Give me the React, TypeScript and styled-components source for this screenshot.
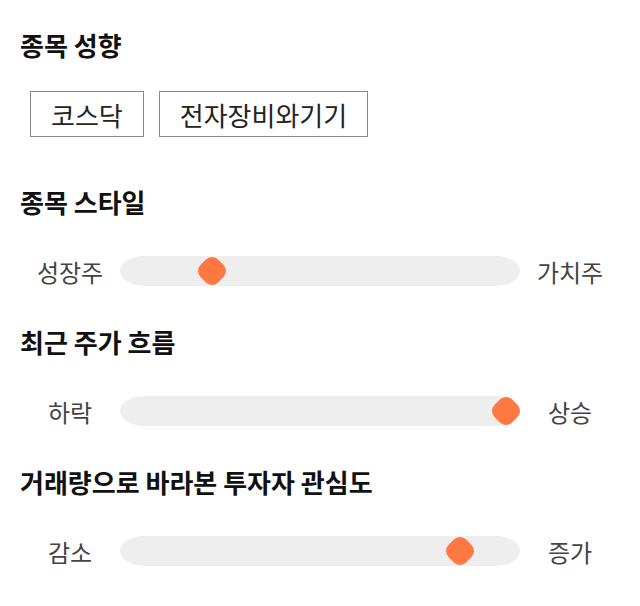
import styled, { createGlobalStyle } from 'styled-components'

const GlobalStyle = createGlobalStyle`
  body {
    margin: 0;
    background: #fff;
    font-family: "Noto Sans CJK KR", "Noto Sans", sans-serif;
  }
`

const sliders = [
  { title: '종목 스타일', left: '성장주', right: '가치주', value: 23 },
  { title: '최근 주가 흐름', left: '하락', right: '상승', value: 96.5 },
  { title: '거래량으로 바라본 투자자 관심도', left: '감소', right: '증가', value: 85 },
]

export default function App() {
  return (
    <>
      <GlobalStyle />
      <Page>
        <Section $gap={50}>
          <Title>종목 성향</Title>
          <Tags>
            <Tag>코스닥</Tag>
            <Tag>전자장비와기기</Tag>
          </Tags>
        </Section>
        {sliders.map((s) => (
          <Section key={s.title} $gap={31}>
            <Title>{s.title}</Title>
            <SliderRow>
              <Label>{s.left}</Label>
              <Track>
                <Thumb style={{ left: `${s.value}%` }} />
              </Track>
              <Label>{s.right}</Label>
            </SliderRow>
          </Section>
        ))}
      </Page>
    </>
  )
}

const Page = styled.div`
  padding: 30px 20px 0;
  display: flex;
  flex-direction: column;
`

const Section = styled.section<{ $gap: number }>`
  display: flex;
  flex-direction: column;
  margin-bottom: ${(p) => p.$gap}px;
`

const Title = styled.h2`
  margin: 0;
  height: 30px;
  line-height: 30px;
  font-size: 26px;
  font-weight: 700;
  color: #111;
`

const Tags = styled.div`
  display: flex;
  gap: 15px;
  margin: 31px 0 0 10px;
`

const Tag = styled.div`
  height: 46px;
  box-sizing: border-box;
  padding: 0 20px;
  border: 1px solid #8a8a8a;
  display: flex;
  align-items: center;
  font-size: 26px;
  color: #222;
`

const SliderRow = styled.div`
  display: grid;
  grid-template-columns: 100px 1fr 100px;
  align-items: center;
  height: 50px;
  margin-top: 29px;
`

const Label = styled.span`
  text-align: center;
  font-size: 24px;
  color: #444;
`

const Track = styled.div`
  position: relative;
  height: 30px;
  background: #eeeeee;
  border-radius: 24px / 15px;
`

const Thumb = styled.div`
  position: absolute;
  top: 50%;
  width: 25px;
  height: 25px;
  border-radius: 9px;
  background: #ff7842;
  transform: translate(-50%, -50%) rotate(45deg);
`
